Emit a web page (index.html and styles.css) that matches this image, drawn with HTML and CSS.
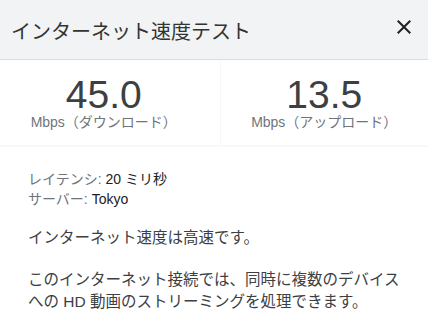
FILE: index.html
```html
<!DOCTYPE html>
<html lang="ja">
<head>
    <meta charset="UTF-8">
    <meta name="viewport" content="width=device-width, initial-scale=1.0">
    <title>インターネット速度テスト</title>
    <link rel="stylesheet" href="styles.css">
</head>
<body>

<div class="panel">
    <!-- Title bar -->
    <header class="panel-header">
        <h1 class="panel-title">インターネット速度テスト</h1>
        <button class="close-btn" aria-label="閉じる">
            <svg width="24" height="24" viewBox="0 0 24 24">
                <path d="M19 6.41L17.59 5 12 10.59 6.41 5 5 6.41 10.59 12 5 17.59 6.41 19 12 13.41 17.59 19 19 17.59 13.41 12z"/>
            </svg>
        </button>
    </header>

    <!-- Speeds -->
    <div class="stats">
        <div class="stat stat-down">
            <div class="stat-value">45.0</div>
            <div class="stat-unit">Mbps（ダウンロード）</div>
        </div>
        <div class="stat stat-up">
            <div class="stat-value">13.5</div>
            <div class="stat-unit">Mbps（アップロード）</div>
        </div>
    </div>

    <!-- Details -->
    <div class="details">
        <div class="meta">
            <div><span class="meta-label">レイテンシ:</span> 20 ミリ秒</div>
            <div><span class="meta-label">サーバー:</span> Tokyo</div>
        </div>
        <p class="summary">インターネット速度は高速です。</p>
        <p class="summary">このインターネット接続では、同時に複数のデバイスへの HD 動画のストリーミングを処理できます。</p>
    </div>
</div>

</body>
</html>
```

FILE: styles.css
```css
* {
    margin: 0;
    padding: 0;
    box-sizing: border-box;
}
body {
    font-family: "Liberation Sans", Arial, "Noto Sans CJK JP", sans-serif;
    background-color: #ffffff;
    color: #3c4043;
}

/* Title bar */
.panel-header {
    display: flex;
    align-items: flex-start;
    justify-content: space-between;
    height: 60px;
    padding: 0 12px 0 11px;
    background-color: #f1f3f4;
    border-bottom: 1px solid #dadce0;
}
.panel-title {
    margin-top: 18px;
    font-size: 20px;
    font-weight: normal;
    line-height: 28px;
    color: #333333;
}
.close-btn {
    margin-top: 15px;
    width: 24px;
    height: 24px;
    border: none;
    background: none;
    cursor: pointer;
}
.close-btn svg {
    display: block;
    fill: #202124;
}

/* Speeds */
.stats {
    display: flex;
    height: 87px;
    border-bottom: 2px solid #f8f9fa;
}
.stat {
    flex: 1;
    display: flex;
    flex-direction: column;
    align-items: center;
    padding-top: 15px;
}
.stat-down {
    padding-right: 12px;
    border-right: 1px solid #f6f7f8;
}
.stat-value {
    font-size: 39px;
    line-height: 39px;
    color: #3c4043;
}
.stat-unit {
    font-size: 14px;
    line-height: 16px;
    color: #70757a;
}

/* Details */
.details {
    padding: 22px 20px 0 28px;
}
.meta {
    font-size: 14px;
    line-height: 20px;
    color: #202124;
}
.meta-label {
    color: #70757a;
}
.summary {
    margin-top: 18px;
    font-size: 15.5px;
    line-height: 22px;
    color: #3c4043;
}
.summary + .summary {
    margin-top: 20px;
}
```
